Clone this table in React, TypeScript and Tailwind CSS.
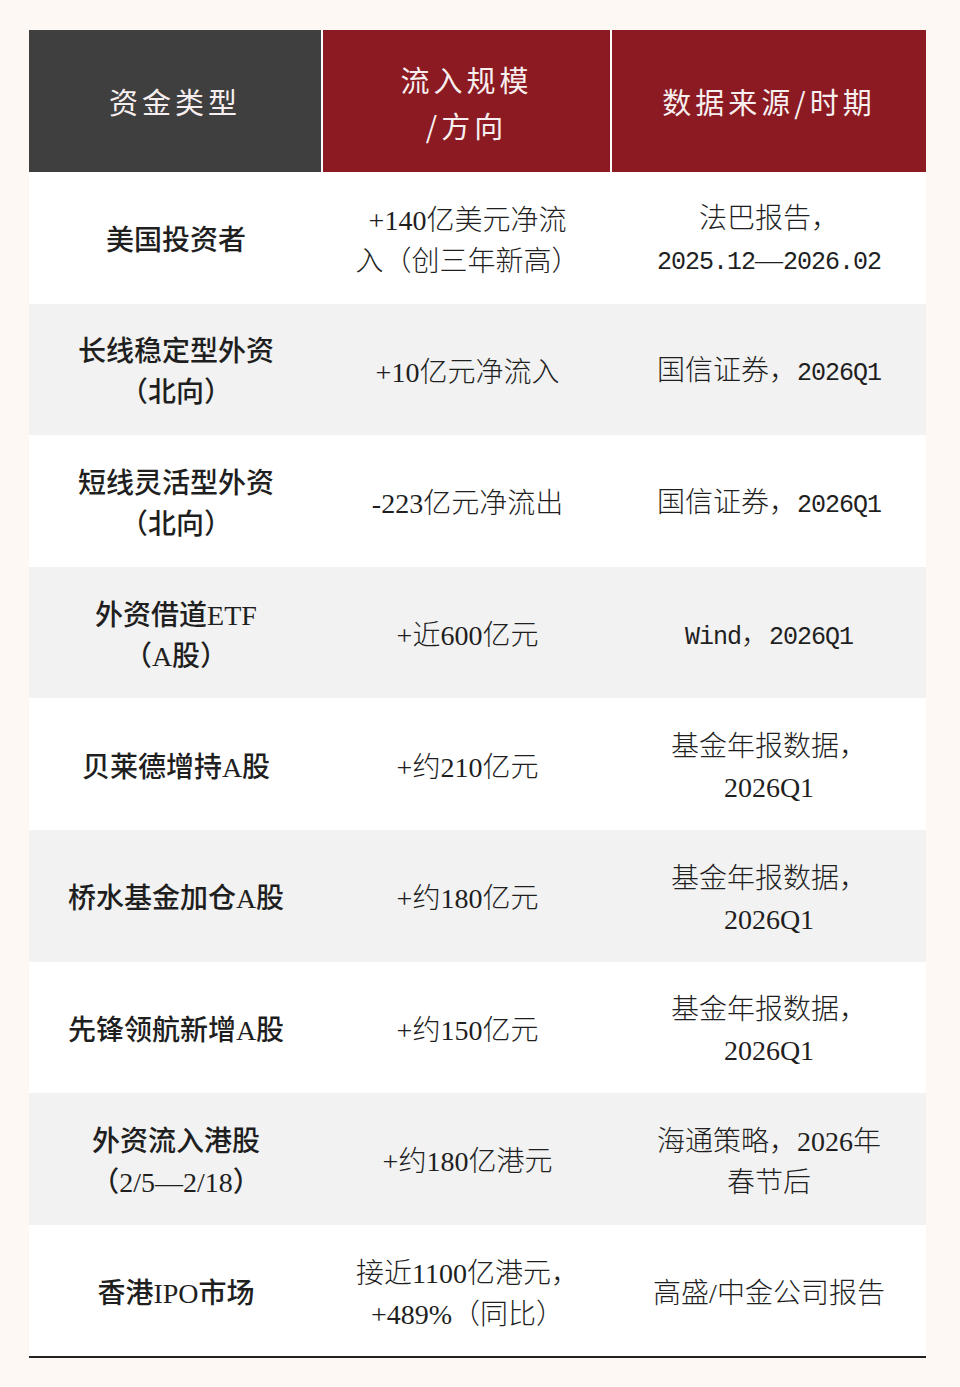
import React from 'react';

const serif = 'font-["Liberation_Serif","Noto_Sans_CJK_SC",serif]';

function M({ children }: { children: React.ReactNode }) {
  return (
    <span className='font-["Liberation_Mono","Noto_Sans_CJK_SC",monospace] text-[25px] tracking-[-1px]'>{children}</span>
  );
}

type Row = { a: React.ReactNode[]; b: React.ReactNode[]; c: React.ReactNode[] };

const rows: Row[] = [
  {
    a: ['美国投资者'],
    b: ['+140亿美元净流', '入（创三年新高）'],
    c: ['法巴报告，', <><M>2025.12</M>—<M>2026.02</M></>],
  },
  {
    a: ['长线稳定型外资', '（北向）'],
    b: ['+10亿元净流入'],
    c: [<>国信证券，<M>2026Q1</M></>],
  },
  {
    a: ['短线灵活型外资', '（北向）'],
    b: ['-223亿元净流出'],
    c: [<>国信证券，<M>2026Q1</M></>],
  },
  {
    a: ['外资借道ETF', '（A股）'],
    b: ['+近600亿元'],
    c: [<><M>Wind</M>，<M>2026Q1</M></>],
  },
  { a: ['贝莱德增持A股'], b: ['+约210亿元'], c: ['基金年报数据，', '2026Q1'] },
  { a: ['桥水基金加仓A股'], b: ['+约180亿元'], c: ['基金年报数据，', '2026Q1'] },
  { a: ['先锋领航新增A股'], b: ['+约150亿元'], c: ['基金年报数据，', '2026Q1'] },
  { a: ['外资流入港股', '（2/5—2/18）'], b: ['+约180亿港元'], c: ['海通策略，2026年', '春节后'] },
  { a: ['香港IPO市场'], b: ['接近1100亿港元，', '+489%（同比）'], c: ['高盛/中金公司报告'] },
];

function Lines({ lines, className }: { lines: React.ReactNode[]; className: string }) {
  return (
    <div
      className={`flex flex-col items-center justify-center pt-[6px] text-center text-[28px] leading-[41px] text-[#1f1f1f] ${serif} ${className}`}
    >
      {lines.map((l, i) => (
        <div key={i} className="whitespace-nowrap">{l}</div>
      ))}
    </div>
  );
}

export default function App() {
  return (
    <div className="min-h-[1387px] w-full bg-[#fdf8f3] pt-[30px] pl-[29px]">
      <div className="w-[897px]">
        <div className='grid grid-cols-[294px_289px_314px] h-[142px] text-[29px] tracking-[4px] text-[#f7efef] font-["Noto_Sans_CJK_SC",sans-serif] font-normal'>
          <div className="flex items-center justify-center bg-[#3f3f3f] border-r-2 border-white pt-[2px]">资金类型</div>
          <div className="flex flex-col items-center justify-center bg-[#8b1a22] border-r-2 border-white leading-[46px] pt-[2px]">
            <div>流入规模</div>
            <div>/方向</div>
          </div>
          <div className="flex items-center justify-center bg-[#8b1a22] pt-[2px]">数据来源/时期</div>
        </div>
        {rows.map((r, i) => (
          <div
            key={i}
            className={`grid grid-cols-[294px_289px_314px] h-[131.6px] ${i % 2 === 0 ? 'bg-white' : 'bg-[#f2f2f2]'}`}
          >
            <Lines lines={r.a} className="font-medium" />
            <Lines lines={r.b} className="font-light" />
            <Lines lines={r.c} className="font-light" />
          </div>
        ))}
        <div className="h-[2px] bg-[#222222]" />
      </div>
    </div>
  );
}
